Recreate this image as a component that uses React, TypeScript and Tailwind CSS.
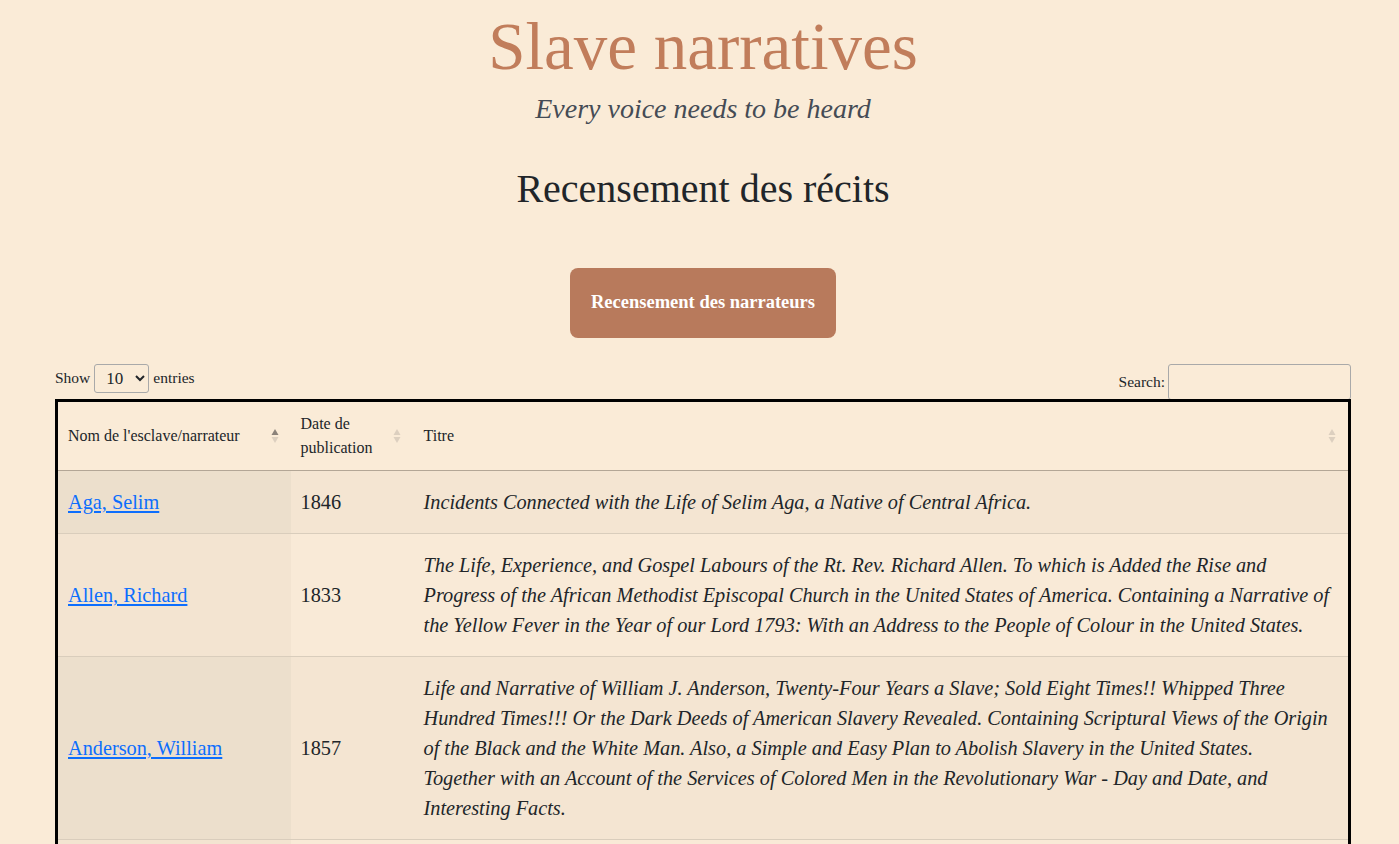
import React from "react";

const serif = { fontFamily: '"Liberation Serif", "Times New Roman", serif' };

type Row = { name: string; date: string; title: string };

const rows: Row[] = [
  {
    name: "Aga, Selim",
    date: "1846",
    title:
      "Incidents Connected with the Life of Selim Aga, a Native of Central Africa.",
  },
  {
    name: "Allen, Richard",
    date: "1833",
    title:
      "The Life, Experience, and Gospel Labours of the Rt. Rev. Richard Allen. To which is Added the Rise and Progress of the African Methodist Episcopal Church in the United States of America. Containing a Narrative of the Yellow Fever in the Year of our Lord 1793: With an Address to the People of Colour in the United States.",
  },
  {
    name: "Anderson, William",
    date: "1857",
    title:
      "Life and Narrative of William J. Anderson, Twenty-Four Years a Slave; Sold Eight Times!! Whipped Three Hundred Times!!! Or the Dark Deeds of American Slavery Revealed. Containing Scriptural Views of the Origin of the Black and the White Man. Also, a Simple and Easy Plan to Abolish Slavery in the United States.\nTogether with an Account of the Services of Colored Men in the Revolutionary War - Day and Date, and Interesting Facts.",
  },
  {
    name: "Arthur, John",
    date: "1768",
    title:
      "The Life, and Dying Speech of Arthur, a Negro Man; Who Was Executed at Worcester, October 20, 1768. For a Rape Committed on the Body of One Deborah Metcalfe.",
  },
];

const SortIcon = ({ active }: { active?: boolean }) => (
  <svg width="8" height="16" viewBox="0 0 8 16" className="shrink-0">
    <path d="M4 1 L7.5 7 L0.5 7 Z" fill={active ? "#8b827a" : "#dccfbf"} />
    <path d="M4 15 L7.5 9 L0.5 9 Z" fill="#dccfbf" />
  </svg>
);

const App = () => {
  return (
    <div style={serif} className="min-h-screen bg-[#faebd7] text-[#212529]">
      <main className="pl-[55px] pr-[48px] flex flex-col items-center">
        {/* Header */}
        <h1 className="pt-[6px] text-[67px] leading-[80px] text-[#c17d5b]">
          Slave narratives
        </h1>
        <p className="mt-[6px] text-[28px] leading-[34px] italic text-[#454b55]">
          Every voice needs to be heard
        </p>
        <h2 className="mt-[39px] text-[40px] leading-[48px] text-[#212529]">
          Recensement des récits
        </h2>
        <button className="mt-[55px] w-[266px] h-[70px] rounded-lg bg-[#b87a5c] text-white font-bold text-[18.5px]">
          Recensement des narrateurs
        </button>

        {/* Controls */}
        <div className="w-full mt-[24px] flex justify-between items-start h-[37px]">
          <label className="flex items-center gap-[4px] text-[15.5px] h-[30px] pt-[2px]">
            Show
            <select className="h-[29px] w-[55px] pl-[7px] rounded-[3px] border border-[#a9a9a9] bg-[#faebd7] text-[17px]">
              <option>10</option>
              <option>25</option>
              <option>50</option>
              <option>100</option>
            </select>
            entries
          </label>
          <label className="flex items-center gap-[3px] text-[15.5px] h-[36px] pt-[3px]">
            Search:
            <input
              type="text"
              className="w-[183px] h-[36px] rounded-[3px] border border-[#a9a9a9] bg-[#faebd7]"
            />
          </label>
        </div>

        {/* Table */}
        <table className="w-full border-collapse border-[3px] border-black">
          <thead>
            <tr className="h-[70px] border-b border-[#b3a696] text-[16px] leading-[24px]">
              <th className="w-[234px] pl-[10px] pr-[12px] text-left font-normal">
                <div className="flex items-center justify-between">
                  <span>Nom de l'esclave/narrateur</span>
                  <SortIcon active />
                </div>
              </th>
              <th className="w-[122px] pl-[10px] pr-[12px] text-left font-normal">
                <div className="flex items-center justify-between">
                  <span>
                    Date de
                    <br />
                    publication
                  </span>
                  <SortIcon />
                </div>
              </th>
              <th className="pl-[11px] pr-[12px] text-left font-normal">
                <div className="flex items-center justify-between">
                  <span>Titre</span>
                  <SortIcon />
                </div>
              </th>
            </tr>
          </thead>
          <tbody className="text-[20.3px] leading-[30px]">
            {rows.map((r, i) => {
              const odd = i % 2 === 0;
              return (
                <tr
                  key={r.name}
                  className={`border-t border-[#d9cdbc] ${odd ? "bg-[#f4e5d2]" : "bg-[#f9ead7]"}`}
                >
                  <td
                    className={`px-[10px] py-[16px] align-middle ${odd ? "bg-[#ecdfcc]" : "bg-[#f3e4d1]"}`}
                  >
                    <a href="#" className="text-[#0d6efd] underline">
                      {r.name}
                    </a>
                  </td>
                  <td className="px-[10px] py-[16px] align-middle">{r.date}</td>
                  <td className="pl-[11px] pr-[10px] py-[16px] align-middle italic whitespace-pre-line">
                    {r.title}
                  </td>
                </tr>
              );
            })}
          </tbody>
        </table>
      </main>
    </div>
  );
};

export default App;
